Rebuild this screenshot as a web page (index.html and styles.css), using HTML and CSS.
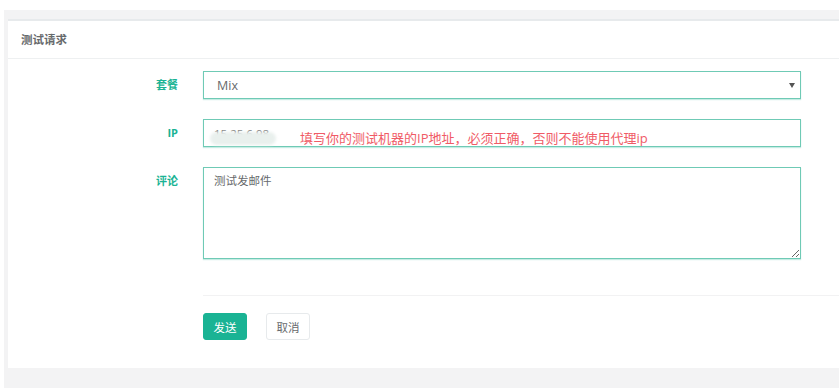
FILE: index.html
```html
<!DOCTYPE html>
<html lang="zh-CN">
<head>
<meta charset="utf-8">
<title>测试请求</title>
<link rel="stylesheet" href="styles.css">
</head>
<body>
<div class="wrapper">
  <div class="ibox">
    <div class="ibox-title">测试请求</div>
    <div class="ibox-content">
      <form class="form">
        <label class="label">套餐</label>
        <div class="field select-wrap">
          <select class="control select">
            <option>Mix</option>
          </select>
          <span class="caret"></span>
        </div>

        <label class="label">IP</label>
        <div class="field ip-wrap">
          <input class="control input" type="text" value="15.25.6.98">
          <span class="blur"></span>
          <span class="hint">填写你的测试机器的IP地址，必须正确，否则不能使用代理ip</span>
        </div>

        <label class="label">评论</label>
        <div class="field">
          <textarea class="control textarea">测试发邮件</textarea>
        </div>

        <div class="actions">
          <div class="divider"></div>
          <div class="buttons">
            <button type="button" class="btn btn-primary">发送</button>
            <button type="button" class="btn btn-white">取消</button>
          </div>
        </div>
      </form>
    </div>
  </div>
</div>
</body>
</html>
```
FILE: styles.css
```css
html, body {
  margin: 0;
  padding: 0;
  background: #ffffff;
}

body {
  font-family: "Open Sans", "Noto Sans CJK SC", sans-serif;
  color: #676a6c;
}

.wrapper {
  margin: 10px 0 0 4px;
  padding: 9px 0 20px 4px;
  background: #f3f3f4;
  overflow: hidden;
}

.ibox {
  background: #ffffff;
  border-top: 2px solid #e7eaec;
}

.ibox-title {
  height: 37px;
  line-height: 37px;
  padding: 0 13px;
  font-size: 11.5px;
  font-weight: 700;
  color: #676a6c;
  border-bottom: 1px solid #eef0f1;
}

.ibox-content {
  padding: 12px 0 28px 0;
}

.form {
  display: grid;
  grid-template-columns: 170px 1fr;
  column-gap: 25px;
  row-gap: 20px;
  align-items: start;
}

.label {
  text-align: right;
  font-size: 11px;
  font-weight: 700;
  line-height: 28px;
  color: #1ab394;
  font-family: "Open Sans", "Noto Sans CJK SC", sans-serif;
}

.field {
  margin-right: 38px;
  position: relative;
}

.control {
  display: block;
  box-sizing: border-box;
  width: 100%;
  margin: 0;
  background: #ffffff;
  border: 1px solid #6fcab5;
  border-radius: 0;
  box-shadow: 0 1px 1px rgba(26, 179, 148, 0.25);
  font-family: "Open Sans", "Noto Sans CJK SC", sans-serif;
  color: #676a6c;
  outline: none;
}

.select {
  height: 28px;
  padding: 0 0 0 13px;
  font-size: 12.5px;
  -webkit-appearance: none;
  appearance: none;
}

.caret {
  position: absolute;
  right: 6px;
  top: 12px;
  width: 0;
  height: 0;
  border-left: 3px solid transparent;
  border-right: 3px solid transparent;
  border-top: 5px solid #555555;
}

.input {
  height: 28px;
  padding: 0 10px;
  font-size: 11.5px;
  color: #777;
}

.blur {
  position: absolute;
  left: 7px;
  top: 13px;
  width: 66px;
  height: 13px;
  border-radius: 7px;
  background: #e9f0ed;
  filter: blur(1.5px);
}

.hint {
  position: absolute;
  left: 97px;
  top: 11px;
  font-size: 13px;
  line-height: 17px;
  color: #f05b66;
  white-space: nowrap;
  font-family: "Open Sans", "Noto Sans CJK SC", sans-serif;
}

.textarea {
  height: 92px;
  padding: 4px 10px;
  font-size: 11.5px;
  line-height: 18px;
  resize: vertical;
}

.actions {
  grid-column: 2;
  margin-top: 16px;
}

.divider {
  height: 1px;
  background: #f2f2f3;
}

.buttons {
  display: flex;
  gap: 19px;
  margin-top: 17px;
}

.btn {
  box-sizing: border-box;
  height: 27px;
  width: 44px;
  padding: 0;
  border-radius: 3px;
  font-size: 11.5px;
  font-family: "Open Sans", "Noto Sans CJK SC", sans-serif;
  cursor: pointer;
}

.btn-primary {
  background: #1ab394;
  border: 1px solid #1ab394;
  color: #ffffff;
}

.btn-white {
  background: #ffffff;
  border: 1px solid #e7eaec;
  color: #676a6c;
}
```
